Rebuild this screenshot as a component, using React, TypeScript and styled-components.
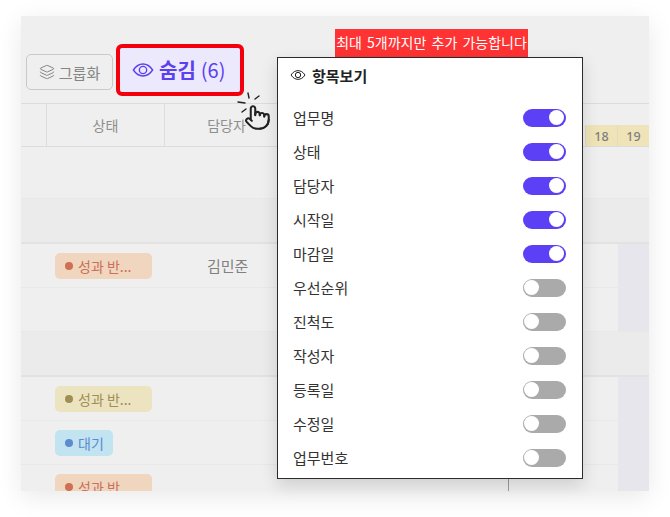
import React from "react";
import styled, { createGlobalStyle } from "styled-components";
import { Layers, Pointer } from "lucide-react";

const Global = createGlobalStyle`
  html, body { margin: 0; padding: 0; background: #fff; }
  body { font-family: "Noto Sans CJK KR", "Noto Sans", sans-serif; width: 670px; height: 517px; overflow: hidden; }
`;

const Frame = styled.div`
  position: relative;
  width: 628px;
  height: 475px;
  margin: 16px 0 0 21px;
  background: #efefef;
  box-shadow: 0 6px 24px rgba(0, 0, 0, 0.09);
`;

const Clip = styled.div`
  height: 475px;
  overflow: hidden;
`;

const Toolbar = styled.div`
  display: flex;
  align-items: center;
  gap: 3px;
  height: 87px;
  padding: 25px 0 0 5px;
  box-sizing: border-box;
`;

const GroupButton = styled.div`
  display: flex;
  align-items: center;
  justify-content: center;
  gap: 4px;
  width: 87px;
  height: 36px;
  box-sizing: border-box;
  border: 1px solid #c9c9c9;
  border-radius: 5px;
  color: #858585;
  font-size: 15px;
`;

const HiddenButton = styled.div`
  display: flex;
  align-items: center;
  justify-content: flex-start;
  gap: 5px;
  width: 128px;
  height: 52px;
  margin-bottom: 5px;
  padding-left: 12px;
  box-sizing: border-box;
  border: 4px solid #f2000c;
  border-radius: 6px;
  background: #ece9fd;
  color: #5b40f0;
  font-size: 20px;
`;

const HiddenLabel = styled.span`
  font-weight: 700;
`;

const HeaderRow = styled.div`
  display: flex;
  height: 44px;
  box-sizing: border-box;
  border-top: 1px solid #dcdcdc;
  border-bottom: 1px solid #dcdcdc;
`;

const HeadCell = styled.div<{ $w: number }>`
  flex: 0 0 ${(p) => p.$w}px;
  display: flex;
  align-items: center;
  justify-content: center;
  box-sizing: border-box;
  border-right: 1px solid #dcdcdc;
  color: #8e8e8e;
  font-size: 14px;
`;

const DateBand = styled.div`
  flex: 1;
  display: flex;
  justify-content: flex-end;
  align-items: flex-end;
`;

const DateCell = styled.div`
  width: 32px;
  height: 21px;
  box-sizing: border-box;
  border-left: 1px solid #e2dcc4;
  background: #efe3b8;
  color: #7f7f7f;
  font-family: "Noto Sans", sans-serif;
  font-size: 12.500px;
  font-weight: 500;
  line-height: 23px;
  text-align: center;
`;

const Row = styled.div<{ $h: number; $group?: boolean }>`
  display: flex;
  align-items: center;
  height: ${(p) => p.$h}px;
  box-sizing: border-box;
  border-bottom: ${(p) => (p.$group ? "2px solid #e2e2e2" : "1px solid #e8e8e8")};
  background: ${(p) => (p.$group ? "#ebebeb" : "#efefef")};
`;

const StatusCell = styled.div`
  flex: 0 0 144px;
  box-sizing: border-box;
  padding-left: 34px;
`;

const NameCell = styled.div`
  flex: 0 0 124px;
  padding-left: 42px;
  box-sizing: border-box;
  color: #808080;
  font-size: 15px;
`;

const Spacer = styled.div`
  flex: 1;
`;

const Weekend = styled.div`
  flex: 0 0 31px;
  align-self: stretch;
  background: #e6e6ec;
`;

const Badge = styled.div<{ $bg: string; $fg: string; $w: number }>`
  display: flex;
  align-items: center;
  gap: 5px;
  width: ${(p) => p.$w}px;
  height: 26px;
  padding-left: 10px;
  box-sizing: border-box;
  border-radius: 5px;
  background: ${(p) => p.$bg};
  color: ${(p) => p.$fg};
  font-size: 14px;
  white-space: nowrap;
`;

const Dot = styled.span<{ $c: string }>`
  width: 8px;
  height: 8px;
  border-radius: 50%;
  background: ${(p) => p.$c};
`;

const TodayLine = styled.div`
  position: absolute;
  left: 487px;
  top: 450px;
  width: 1px;
  height: 25px;
  background: #9a9a9a;
`;

const Warning = styled.div`
  position: absolute;
  left: 314px;
  top: 13px;
  height: 28px;
  width: 193px;
  background: #ff3333;
  color: #fff;
  font-size: 14px;
  word-spacing: 2px;
  line-height: 27px;
  text-align: center;
  white-space: nowrap;
`;

const Popover = styled.div`
  position: absolute;
  left: 256px;
  top: 41px;
  width: 306px;
  height: 422px;
  box-sizing: border-box;
  padding: 0 16.500px 0 15px;
  border: 1.5px solid #2b2b2b;
  background: #fff;
  box-shadow: 0 6px 16px rgba(0, 0, 0, 0.14);
`;

const PopHead = styled.div`
  display: flex;
  align-items: center;
  gap: 6px;
  height: 34px;
  margin-left: -3px;
  color: #222;
  font-size: 15px;
  font-weight: 700;
`;

const List = styled.div`
  margin-top: 8.500px;
`;

const Item = styled.div`
  display: flex;
  align-items: center;
  justify-content: space-between;
  height: 34px;
  color: #333;
  font-size: 15px;
`;

const Track = styled.div<{ $on: boolean }>`
  display: flex;
  justify-content: ${(p) => (p.$on ? "flex-end" : "flex-start")};
  align-items: center;
  width: 43px;
  height: 18px;
  padding: 0 1.500px;
  border-radius: 9px;
  box-sizing: border-box;
  background: ${(p) => (p.$on ? "#5b40f5" : "#aaaaaa")};
`;

const Knob = styled.div`
  width: 15px;
  height: 15px;
  border-radius: 50%;
  background: #fff;
`;

const Cursor = styled.div`
  position: absolute;
  left: 215px;
  top: 76px;
  width: 38px;
  height: 40px;
  color: #222;
`;

const Eye = ({ size, w = 1.5 }: { size: number; w?: number }) => (
  <svg width={size} height={size} viewBox="0 0 24 24" fill="none" stroke="currentColor" strokeWidth={w}>
    <path d="M1.500 12C4.500 7.500 8 5.500 12 5.500s7.500 2 10.500 6.500C19.500 16.500 16 18.500 12 18.500S4.500 16.500 1.500 12Z" />
    <circle cx="12" cy="12" r="4" />
  </svg>
);

const items: [string, boolean][] = [
  ["업무명", true], ["상태", true], ["담당자", true], ["시작일", true], ["마감일", true],
  ["우선순위", false], ["진척도", false], ["작성자", false], ["등록일", false], ["수정일", false], ["업무번호", false],
];

const orange = { $bg: "#f0d5bf", $fg: "#cb7058" };

export default function App() {
  return (
    <Frame>
      <Global />
      <Clip>
        <Toolbar>
          <GroupButton><Layers size={16} strokeWidth={1.5} />그룹화</GroupButton>
          <HiddenButton><Eye size={22} /><HiddenLabel>숨김</HiddenLabel><span>(6)</span></HiddenButton>
        </Toolbar>
        <HeaderRow>
          <HeadCell $w={26} />
          <HeadCell $w={118}>상태</HeadCell>
          <HeadCell $w={124}>담당자</HeadCell>
          <DateBand><DateCell>18</DateCell><DateCell>19</DateCell></DateBand>
        </HeaderRow>
        <Row $h={52} />
        <Row $h={45} $group />
        <Row $h={44}>
          <StatusCell><Badge {...orange} $w={97}><Dot $c="#cf6f53" />성과 반...</Badge></StatusCell>
          <NameCell>김민준</NameCell><Spacer /><Weekend />
        </Row>
        <Row $h={44}><Spacer /><Weekend /></Row>
        <Row $h={45} $group />
        <Row $h={44}>
          <StatusCell><Badge $bg="#ece3c0" $fg="#a08e55" $w={97}><Dot $c="#a08e55" />성과 반...</Badge></StatusCell>
          <Spacer /><Weekend />
        </Row>
        <Row $h={44}>
          <StatusCell><Badge $bg="#c2e3f0" $fg="#5b8bd0" $w={58}><Dot $c="#5b8bd0" />대기</Badge></StatusCell>
          <Spacer /><Weekend />
        </Row>
        <Row $h={44}>
          <StatusCell><Badge {...orange} $w={97}><Dot $c="#cf6f53" />성과 반...</Badge></StatusCell>
          <Spacer /><Weekend />
        </Row>
      </Clip>
      <TodayLine />
      <Warning>최대 5개까지만 추가 가능합니다</Warning>
      <Popover>
        <PopHead><Eye size={16} />항목보기</PopHead>
        <List>
          {items.map(([label, on]) => (
            <Item key={label}>{label}<Track $on={on}><Knob /></Track></Item>
          ))}
        </List>
      </Popover>
      <Cursor>
        <svg width="38" height="40" viewBox="0 0 38 40" fill="none" stroke="#222" strokeWidth="1.4" strokeLinecap="round">
          <path d="M12 1l1 5M2 10l7 1M23 4l-4 3M6 20l4-3" />
          <g transform="translate(8 12)">
            <Pointer size={27} strokeWidth={1.8} />
          </g>
        </svg>
      </Cursor>
    </Frame>
  );
}
